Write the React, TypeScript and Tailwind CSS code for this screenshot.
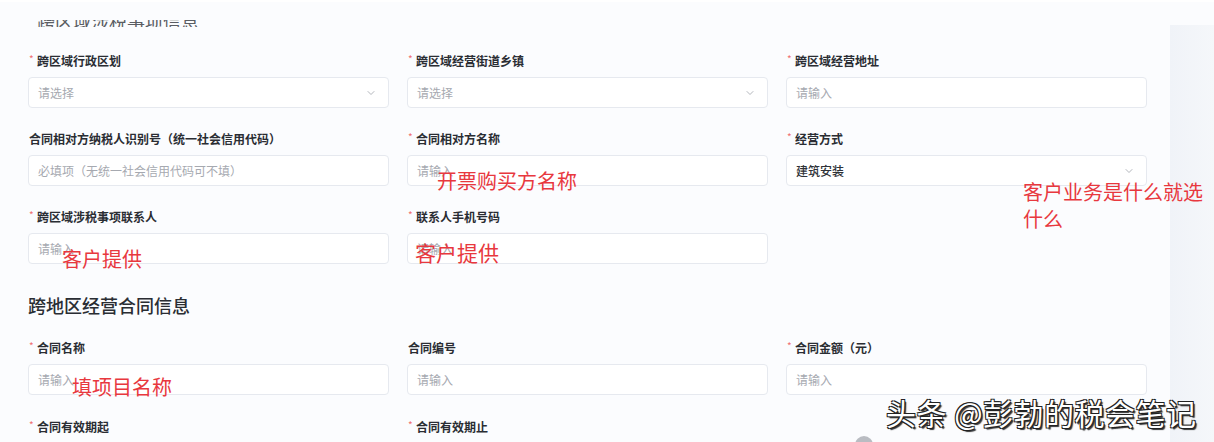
import { ChevronDown } from 'lucide-react';

type Field = {
  label: string;
  required?: boolean;
  placeholder?: string;
  value?: string;
  select?: boolean;
} | null;

const basicRows: Field[][] = [
  [
    { label: '跨区域行政区划', required: true, placeholder: '请选择', select: true },
    { label: '跨区域经营街道乡镇', required: true, placeholder: '请选择', select: true },
    { label: '跨区域经营地址', required: true, placeholder: '请输入' },
  ],
  [
    { label: '合同相对方纳税人识别号（统一社会信用代码）', placeholder: '必填项（无统一社会信用代码可不填）' },
    { label: '合同相对方名称', required: true, placeholder: '请输入' },
    { label: '经营方式', required: true, value: '建筑安装', select: true },
  ],
  [
    { label: '跨区域涉税事项联系人', required: true, placeholder: '请输入' },
    { label: '联系人手机号码', required: true, placeholder: '请输入' },
    null,
  ],
];

const contractRows: Field[][] = [
  [
    { label: '合同名称', required: true, placeholder: '请输入' },
    { label: '合同编号', placeholder: '请输入' },
    { label: '合同金额（元）', required: true, placeholder: '请输入' },
  ],
];

function Label({ text, required }: { text: string; required?: boolean }) {
  return (
    <div className="flex items-center h-[17px] text-[12px] leading-[17px] font-semibold text-[#2a2d33]">
      {required && <span className="text-[#f07070] w-[9px] pl-[1px] text-[10px] -mt-[4px] font-normal">*</span>}
      <span className={required ? '' : 'pl-[1px]'}>{text}</span>
    </div>
  );
}

function FormItem({ field }: { field: Field }) {
  if (!field) return <div />;
  return (
    <div className="flex flex-col gap-[8px]">
      <Label text={field.label} required={field.required} />
      <div className="h-[31px] rounded-[4px] border border-[#e6e9ef] bg-white flex items-center justify-between pl-[9px] pr-[11px]">
        <span className={field.value ? 'text-[12px] text-[#2f3238] font-medium' : 'text-[12px] text-[#a6a9b0]'}>
          {field.value ?? field.placeholder}
        </span>
        {field.select && <ChevronDown size={12} strokeWidth={1.5} className="text-[#9a9ea6]" />}
      </div>
    </div>
  );
}

function Note({ className, children }: { className: string; children: React.ReactNode }) {
  return (
    <div className={`absolute text-[20px] leading-[27px] text-[#e8383e] whitespace-nowrap ${className}`}>
      {children}
    </div>
  );
}

export default function App() {
  return (
    <div
      className="relative w-[1214px] h-[442px] overflow-hidden bg-[#fbfcfe] flex border-t-[2px] border-[#ffffff]"
      style={{ fontFamily: '"Noto Sans CJK SC", "Noto Sans", sans-serif' }}
    >
      <div className="w-[1170px] pl-[28px]">
        {/* clipped section title at the very top */}
        <div className="pt-[18px] pl-[9px]">
          <div className="h-[7px] overflow-hidden flex items-end">
            <span className="text-[18px] leading-[18px] text-[#5a5d63] translate-y-[3px]">跨区域涉税事项信息</span>
          </div>
        </div>

        <div className="mt-[25px] grid grid-cols-[361px_361px_361px] gap-x-[18px] gap-y-[22px]">
          {basicRows.flat().map((f, i) => (
            <FormItem key={i} field={f} />
          ))}
        </div>

        <h2 className="mt-[29px] text-[18px] leading-[24px] font-medium text-[#2a2d33]">跨地区经营合同信息</h2>

        <div className="mt-[22px] grid grid-cols-[361px_361px_361px] gap-x-[18px] gap-y-[23px]">
          {contractRows.flat().map((f, i) => (
            <FormItem key={i} field={f} />
          ))}
          <Label text="合同有效期起" required />
          <Label text="合同有效期止" required />
        </div>
      </div>

      <aside className="mt-[23px] flex-1 bg-gradient-to-r from-[#f0f3f8] to-[#f5f7fa]" />

      {/* hand-written annotations over the form */}
      <Note className="left-[437px] top-[165px]">开票购买方名称</Note>
      <Note className="left-[1023px] top-[176px]">
        客户业务是什么就选
        <br />
        什么
      </Note>
      <Note className="left-[62px] top-[243px]">客户提供</Note>
      <Note className="left-[415px] top-[237px] text-[21px]">客户提供</Note>
      <Note className="left-[72px] top-[371px]">填项目名称</Note>

      {/* watermark */}
      <div className="absolute left-[855px] top-[434px] w-[18px] h-[18px] rounded-full bg-[#b9bcc2]" />
      <div className="absolute left-[886px] top-[392px] text-[30px] leading-[36px] text-white whitespace-nowrap tracking-[0.5px] [text-shadow:1px_1px_0_#222,-1px_-1px_0_#222,1px_-1px_0_#222,-1px_1px_0_#222,2px_2px_1px_#333]">
        头条 @彭勃的税会笔记
      </div>
    </div>
  );
}
